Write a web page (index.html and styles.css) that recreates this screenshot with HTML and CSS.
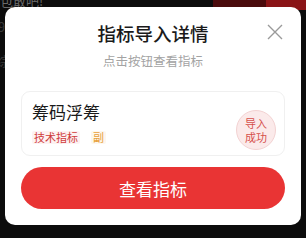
FILE: index.html
```html
<!DOCTYPE html>
<html lang="zh">
<head>
<meta charset="utf-8">
<link rel="stylesheet" href="styles.css">
</head>
<body>
<div class="backdrop">
  <span class="bg-text bg-t1">包敢吧!</span>
  <span class="bg-text bg-t2">9</span>
  <span class="bg-text bg-t3">综</span>
  <div class="bg-red"></div>
  <div class="bg-red2"></div>
</div>
<div class="modal">
  <button class="close" aria-label="关闭">
    <svg width="16" height="16" viewBox="0 0 16 16"><path d="M1 1L15 15M15 1L1 15" stroke="#9a9a9a" stroke-width="1.4" fill="none"/></svg>
  </button>
  <h1 class="title">指标导入详情</h1>
  <p class="subtitle">点击按钮查看指标</p>
  <div class="card">
    <div class="card-title">筹码浮筹</div>
    <div class="tags">
      <span class="tag tag-red">技术指标</span>
      <span class="tag tag-orange">副</span>
    </div>
    <div class="stamp"><span class="stamp-line">导入</span><span class="stamp-line">成功</span></div>
  </div>
  <button class="primary">查看指标</button>
</div>
</body>
</html>
```
FILE: styles.css
```css
html, body {
  margin: 0;
  padding: 0;
}
body {
  width: 306px;
  height: 238px;
  background: #0c0c0c;
  font-family: "Noto Sans CJK SC", "Noto Sans", sans-serif;
  position: relative;
  overflow: hidden;
  padding: 7px 5px 0;
  box-sizing: border-box;
}
.backdrop {
  position: absolute;
  inset: 0;
  z-index: 0;
}
.bg-text {
  position: absolute;
  color: #6a6a6a;
  font-size: 13px;
  line-height: 14px;
}
.bg-t1 { left: 0; top: -6px; }
.bg-t2 { left: -2px; top: 20px; color: #3a3a3a; }
.bg-t3 { left: -4px; top: 54px; color: #3a3a3a; }
.bg-red {
  position: absolute;
  left: 213px;
  top: 0;
  width: 93px;
  height: 10px;
  background: #4a0b0c;
}
.bg-red2 {
  position: absolute;
  left: 266px;
  top: 0;
  width: 40px;
  height: 10px;
  background: #8a1416;
}
.modal {
  position: relative;
  z-index: 1;
  width: 296px;
  height: 218px;
  background: #ffffff;
  border-radius: 10px;
  padding: 14px 16px 0;
  box-sizing: border-box;
  display: flex;
  flex-direction: column;
}
.close {
  position: absolute;
  right: 18px;
  top: 17px;
  width: 16px;
  height: 16px;
  padding: 0;
  border: 0;
  background: none;
  display: block;
}
.close svg { display: block; }
.title {
  margin: 0;
  text-align: center;
  font-size: 18.5px;
  line-height: 24px;
  font-weight: 500;
  color: #1a1a1a;
}
.subtitle {
  margin: 7px 0 0;
  text-align: center;
  font-size: 12.5px;
  line-height: 18px;
  color: #a3a3a3;
}
.card {
  position: relative;
  margin-top: 21px;
  height: 65px;
  box-sizing: border-box;
  border: 1px solid #f0f0f0;
  border-radius: 9px;
  padding: 9px 10px 0;
}
.card-title {
  font-size: 17px;
  line-height: 22px;
  color: #1a1a1a;
}
.tags {
  margin-top: 8px;
  display: flex;
  gap: 11px;
}
.tag {
  font-size: 11px;
  line-height: 13px;
  padding: 0 2px;
  border-radius: 2px;
}
.tag-red {
  color: #cf3a3a;
  background: #fdf2f2;
}
.tag-orange {
  color: #e8a03a;
  background: #fdf7ee;
}
.stamp {
  position: absolute;
  right: 8px;
  top: 18px;
  width: 38px;
  height: 38px;
  border-radius: 50%;
  background: #fbeaea;
  border: 1px solid #f3d2d2;
  color: #d6504c;
  font-size: 11px;
  display: flex;
  flex-direction: column;
  align-items: center;
  justify-content: center;
}
.stamp-line {
  display: block;
  line-height: 14px;
  height: 14px;
}
.primary {
  margin-top: 11px;
  height: 42px;
  border: 0;
  border-radius: 21px;
  background: #e93434;
  color: #ffffff;
  font-family: "Noto Sans CJK SC", "Noto Sans", sans-serif;
  font-size: 17px;
  padding: 0;
}
```
